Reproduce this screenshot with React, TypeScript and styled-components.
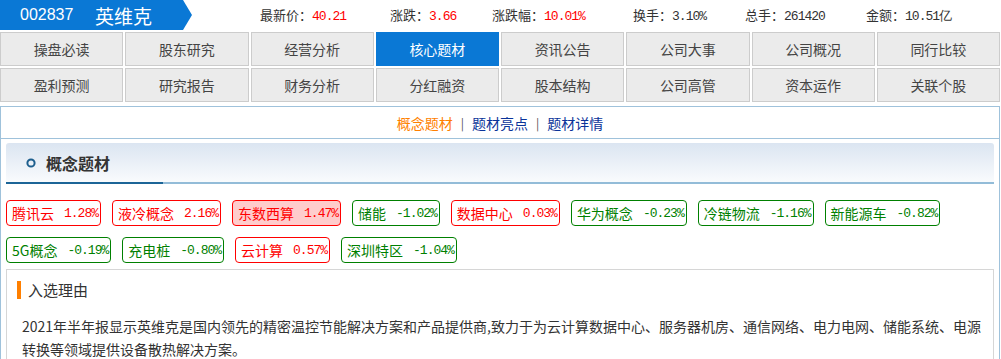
import React from 'react';
import styled, {createGlobalStyle} from "styled-components";

const GlobalStyle = createGlobalStyle`
    body {
        margin: 0;
        background: #ffffff;
        font-family: "Noto Sans CJK SC", "Liberation Sans", sans-serif;
        color: #333333;
    }
`

type Stat = { label: string; value: string; hot?: boolean; width: number };
type Tag = { name: string; change: string; up: boolean; picked?: boolean };

const stats: Stat[] = [
    {label: '最新价', value: '40.21', hot: true, width: 130},
    {label: '涨跌', value: '3.66', hot: true, width: 102},
    {label: '涨跌幅', value: '10.01%', hot: true, width: 141},
    {label: '换手', value: '3.10%', width: 112},
    {label: '总手', value: '261420', width: 121},
    {label: '金额', value: '10.51亿', width: 120},
];

const navItems = [
    '操盘必读', '股东研究', '经营分析', '核心题材', '资讯公告', '公司大事', '公司概况', '同行比较',
    '盈利预测', '研究报告', '财务分析', '分红融资', '股本结构', '公司高管', '资本运作', '关联个股',
];

const tags: Tag[] = [
    {name: '腾讯云', change: '1.28%', up: true},
    {name: '液冷概念', change: '2.16%', up: true},
    {name: '东数西算', change: '1.47%', up: true, picked: true},
    {name: '储能', change: '-1.02%', up: false},
    {name: '数据中心', change: '0.03%', up: true},
    {name: '华为概念', change: '-0.23%', up: false},
    {name: '冷链物流', change: '-1.16%', up: false},
    {name: '新能源车', change: '-0.82%', up: false},
    {name: '5G概念', change: '-0.19%', up: false},
    {name: '充电桩', change: '-0.80%', up: false},
    {name: '云计算', change: '0.57%', up: true},
    {name: '深圳特区', change: '-1.04%', up: false},
];

export default function App() {
    return (
        <StyledPage>
            <GlobalStyle/>
            <StyledTopBar>
                <StyledCodeTab>
                    <StyledCode>002837</StyledCode>
                    <StyledName>英维克</StyledName>
                </StyledCodeTab>
                <StyledStats>
                    {stats.map(s => (
                        <StyledStat key={s.label} $width={s.width}>
                            {s.label}：<StyledStatValue $hot={!!s.hot}>{s.value}</StyledStatValue>
                        </StyledStat>
                    ))}
                </StyledStats>
            </StyledTopBar>

            <StyledNav>
                {navItems.map(item => (
                    <StyledNavButton key={item} $active={item === '核心题材'}>{item}</StyledNavButton>
                ))}
            </StyledNav>

            <StyledPanel>
                <StyledSubNav>
                    <StyledSubLink $active>概念题材</StyledSubLink>
                    <StyledDivider>|</StyledDivider>
                    <StyledSubLink>题材亮点</StyledSubLink>
                    <StyledDivider>|</StyledDivider>
                    <StyledSubLink>题材详情</StyledSubLink>
                </StyledSubNav>

                <StyledSectionHead>
                    <StyledSectionTitle>
                        <svg width="10" height="10" viewBox="0 0 10 10">
                            <circle cx="5" cy="5" r="3.6" fill="none" stroke="#1d5f8e" strokeWidth="2"/>
                        </svg>
                        <span>概念题材</span>
                    </StyledSectionTitle>
                </StyledSectionHead>

                <StyledTagList>
                    {tags.map(t => (
                        <StyledTag key={t.name} $up={t.up} $picked={!!t.picked}>
                            {t.name}<StyledNum>{t.change}</StyledNum>
                        </StyledTag>
                    ))}
                </StyledTagList>

                <StyledReason>
                    <StyledReasonTitle>入选理由</StyledReasonTitle>
                    <StyledReasonText>
                        2021年半年报显示英维克是国内领先的精密温控节能解决方案和产品提供商,致力于为云计算数据中心、服务器机房、通信网络、电力电网、储能系统、电源转换等领域提供设备散热解决方案。
                    </StyledReasonText>
                </StyledReason>
            </StyledPanel>
        </StyledPage>
    );
}

const StyledPage = styled.div`
    width: 1000px;
`
const StyledTopBar = styled.div`
    display: flex;
    align-items: center;
    height: 30px;
`
const StyledCodeTab = styled.div`
    display: flex;
    align-items: center;
    width: 192px;
    height: 30px;
    background: #0a78d5;
    clip-path: polygon(0 0, 183px 0, 192px 15px, 183px 30px, 0 30px);
    color: #ffffff;
    box-sizing: border-box;
    padding-left: 20px;
`
const StyledCode = styled.span`
    font-family: "Liberation Sans", sans-serif;
    font-size: 16px;
    width: 75px;
`
const StyledName = styled.span`
    font-size: 19px;
`
const StyledStats = styled.div`
    display: flex;
    margin-left: 68px;
    font-size: 13px;
`
const StyledStat = styled.div<{ $width: number }>`
    width: ${p => p.$width}px;
    white-space: nowrap;
`
const StyledStatValue = styled.span<{ $hot: boolean }>`
    font-family: "Liberation Mono", monospace;
    font-size: 13px;
    letter-spacing: -1px;
    color: ${p => p.$hot ? '#ff0000' : '#333333'};
`
const StyledNav = styled.div`
    display: grid;
    grid-template-columns: repeat(8, 1fr);
    column-gap: 2px;
    row-gap: 2px;
    margin-top: 2px;
`
const StyledNavButton = styled.div<{ $active: boolean }>`
    height: 34px;
    box-sizing: border-box;
    display: flex;
    align-items: center;
    justify-content: center;
    font-size: 14px;
    background: ${p => p.$active ? '#0a78d5' : '#ebebeb'};
    border: 1px solid ${p => p.$active ? '#0a78d5' : '#cccccc'};
    color: ${p => p.$active ? '#ffffff' : '#444444'};
`
const StyledPanel = styled.div`
    margin-top: 4px;
    border: 1px solid #9fc2db;
    border-bottom: none;
    padding: 0 5px 20px;
`
const StyledSubNav = styled.div`
    display: flex;
    justify-content: center;
    align-items: center;
    height: 31px;
    margin: 0 -5px;
    border-bottom: 1px solid #9fc2db;
    font-size: 14px;
    gap: 8px;
`
const StyledSubLink = styled.span<{ $active?: boolean }>`
    color: ${p => p.$active ? '#ff7f00' : '#0a3399'};
`
const StyledDivider = styled.span`
    color: #555555;
    font-size: 12px;
`
const StyledSectionHead = styled.div`
    margin-top: 4px;
    height: 39px;
    display: flex;
    background: linear-gradient(#dbe5f1, #f9fbfd);
    border-bottom: 2px solid #93bcd8;
    border-radius: 3px 3px 0 0;
`
const StyledSectionTitle = styled.div`
    width: 157px;
    box-sizing: border-box;
    display: flex;
    align-items: center;
    gap: 10px;
    padding-left: 20px;
    margin-bottom: -2px;
    border-bottom: 2px solid #1c6597;
    font-size: 16px;
    font-weight: bold;
    color: #333333;
`
const StyledTagList = styled.div`
    display: flex;
    flex-wrap: wrap;
    gap: 11px;
    margin-top: 16px;
`
const StyledTag = styled.div<{ $up: boolean; $picked: boolean }>`
    height: 26px;
    box-sizing: border-box;
    display: flex;
    align-items: center;
    padding: 0 2px 0 5px;
    border-radius: 4px;
    font-size: 14px;
    white-space: pre;
    color: ${p => p.$up ? '#ff0000' : '#008000'};
    border: 1px solid ${p => p.$up ? '#ff0000' : '#008000'};
    background: ${p => p.$picked ? '#ffcccc' : '#ffffff'};
`
const StyledNum = styled.span`
    font-family: "Liberation Mono", monospace;
    font-size: 13px;
    letter-spacing: -1px;
    margin-left: 10px;
`
const StyledReason = styled.div`
    margin-top: 6px;
    border: 1px solid #d6d6d6;
    padding: 11px 10px 20px;
`
const StyledReasonTitle = styled.div`
    height: 18px;
    line-height: 18px;
    border-left: 4px solid #ff7f00;
    padding-left: 7px;
    font-size: 15px;
    color: #333333;
`
const StyledReasonText = styled.p`
    margin: 16px 0 0 5px;
    font-size: 14px;
    line-height: 23px;
    color: #333333;
`
